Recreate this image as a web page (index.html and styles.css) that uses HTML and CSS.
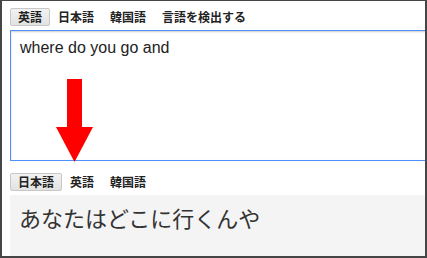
FILE: index.html
```html
<!DOCTYPE html>
<html lang="ja">
<head>
<meta charset="utf-8">
<link rel="stylesheet" href="styles.css">
</head>
<body>
<div class="frame">
  <div class="tabs">
    <span class="tab sel">英語</span>
    <span class="tab">日本語</span>
    <span class="tab">韓国語</span>
    <span class="tab">言語を検出する</span>
  </div>
  <div class="input">where do you go and</div>
  <div class="tabs tabs2">
    <span class="tab sel">日本語</span>
    <span class="tab">英語</span>
    <span class="tab">韓国語</span>
  </div>
  <div class="output">あなたはどこに行くんや</div>
  <svg class="arrow" width="38" height="83" viewBox="0 0 38 83">
    <rect x="11" y="0" width="15" height="49" fill="#ff0000"/>
    <polygon points="0,48 37,48 18.5,83" fill="#ff0000"/>
  </svg>
</div>
</body>
</html>
```
FILE: styles.css
```css
html, body {
  margin: 0;
  padding: 0;
  background: #fff;
}
.frame {
  position: relative;
  width: 427px;
  height: 258px;
  box-sizing: border-box;
  border: 2px solid #454545;
  border-top-width: 1px;
  background: #fff;
  overflow: hidden;
  padding: 7px 0 0 8px;
}
.tabs {
  display: flex;
  height: 18px;
}
.tabs2 {
  margin-top: 12px;
}
.tab {
  font-family: "Noto Sans CJK JP", sans-serif;
  font-weight: bold;
  font-size: 12px;
  line-height: 16px;
  padding: 0 7px;
  border: 1px solid transparent;
  border-radius: 2px;
  color: #222;
  white-space: nowrap;
}
.tab.sel {
  background: linear-gradient(#f2f2f2, #e2e2e2);
  border-color: #c8c8c8;
}
.input {
  margin-top: 4px;
  margin-right: -20px;
  height: 131px;
  box-sizing: border-box;
  border: 1px solid #4d90fe;
  box-shadow: inset 0 1px 2px rgba(0, 0, 0, 0.2);
  padding: 7px 9px;
  font-family: "Liberation Sans", Arial, sans-serif;
  font-size: 16px;
  line-height: 19px;
  color: #222;
}
.output {
  margin-top: 4px;
  margin-right: -20px;
  height: 70px;
  background: #f4f4f4;
  padding: 8px 9px;
  font-family: "Noto Sans CJK JP", sans-serif;
  font-size: 22px;
  line-height: 28px;
  color: #333;
}
.arrow {
  position: absolute;
  left: 54px;
  top: 78px;
}
```
